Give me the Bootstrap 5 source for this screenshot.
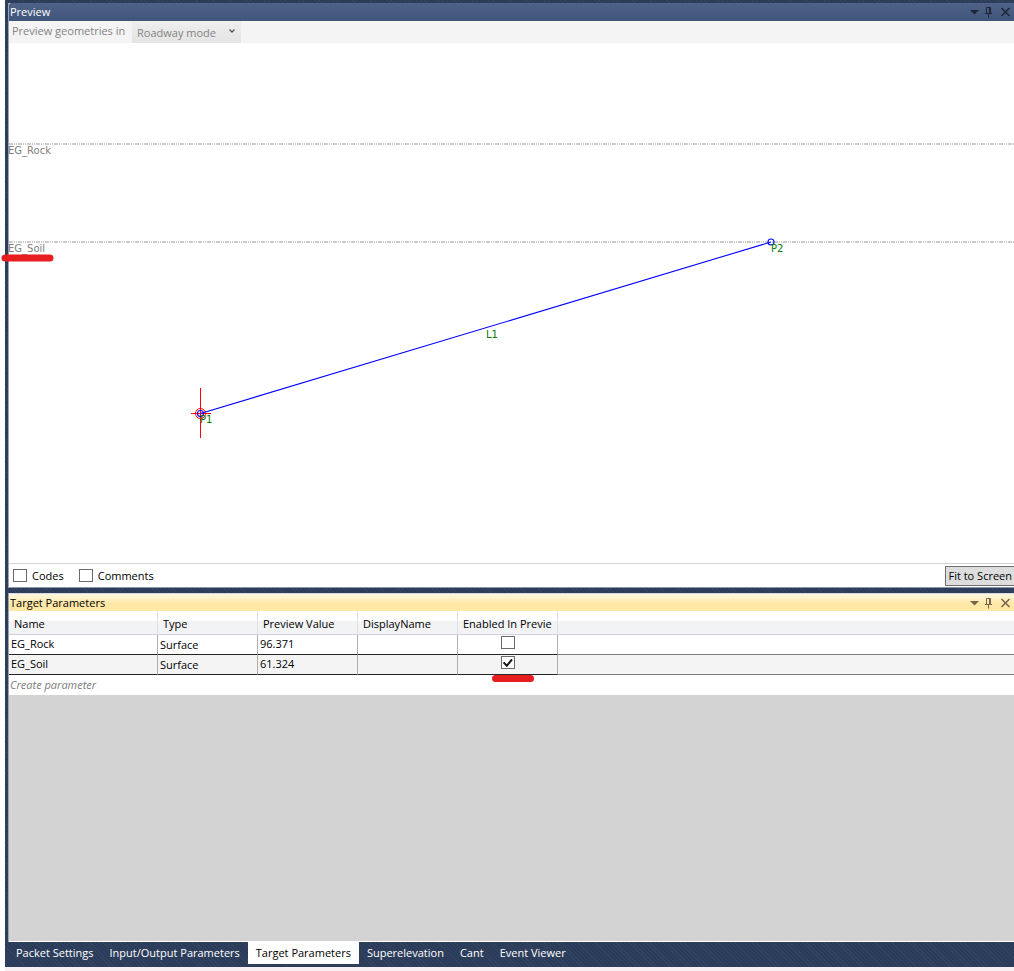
<!DOCTYPE html>
<html lang="en">
<head>
<meta charset="utf-8">
<meta name="viewport" content="width=device-width, initial-scale=1">
<title>Preview</title>
<link href="https://cdn.jsdelivr.net/npm/bootstrap@5.3.0/dist/css/bootstrap.min.css" rel="stylesheet">
<style>
  :root { --navy: #2b3c5a; --navy-alt: #32435f; }
  body { font-family: "Open Sans", "Noto Sans", sans-serif; font-size: 11px; line-height: 16px; color: #000; background: #fff; }
  .shell { margin-left: 5px; min-height: 100vh; border-bottom: 4px solid #f7eff1; }
  .frame { background: repeating-linear-gradient(45deg, var(--navy) 0 2px, var(--navy-alt) 2px 3px); padding: 3px 0 0 3px; }
  .panel { border-left: 1px solid #9aa3b2; background: #fff; }
  .titlebar { height: 18px; padding-left: 1px; }
  .titlebar h2 { font-size: 11px; line-height: 18px; font-weight: 400; }
  .titlebar-preview { background: linear-gradient(#4f6287, #40557b); color: #fff; --glyph: #1c2636; border-top-left-radius: 2px; }
  .titlebar-target { background: linear-gradient(#fff8e2, #ffeaac 50%, #ffe8a6 51%); --glyph: #75684a; border-top: 1px solid #d8d9dc; border-top-left-radius: 2px; }
  .tool { border: 0; padding: 0; background: none; color: var(--glyph); width: 16px; height: 16px; line-height: 0; }
  .toolbar { height: 22px; background: #f4f4f4; color: #838383; }
  .toolbar label { padding-left: 3px; line-height: 20px; width: 123px; white-space: nowrap; }
  .mode { position: relative; }
  .mode select { appearance: none; border: 0; width: 109px; height: 22px; padding: 1px 0 0 5px; font-size: 11px; line-height: 21px; color: #838383; opacity: 1; background: linear-gradient(#eeeeee, #e4e4e4); }
  .mode svg { position: absolute; right: 5px; top: 7px; pointer-events: none; }
  .drawing { display: block; width: 100%; height: 520px; overflow: visible; font-family: "DejaVu Sans", sans-serif; font-size: 10px; }
  .options { height: 25px; border-top: 1px solid #d3d4d8; border-bottom: 1px solid #8d96a5; padding-left: 4px; }
  .options label { margin-left: 5px; margin-right: 15px; }
  .tick { appearance: none; width: 14px; height: 13px; margin: 0; border: 1px solid #6a6a6a; background: #fff; flex: none; }
  .tick:checked { background: #fff url("data:image/svg+xml,%3Csvg xmlns='http://www.w3.org/2000/svg' viewBox='0 0 12 11'%3E%3Cpath d='M1.6 5.4 4.8 8.8 10 2.4' fill='none' stroke='%23151515' stroke-width='2'/%3E%3C/svg%3E") center/12px 11px no-repeat; }
  .fit { border: 1px solid #707070; border-right: 0; background: #ddd; padding: 0 2px; height: 20px; line-height: 18px; white-space: nowrap; }
  .splitter { height: 5px; }
  .grid-view { table-layout: fixed; width: 100%; border-collapse: separate; border-spacing: 0; }
  .grid-view th { height: 24px; padding: 2px 0 0 5px; font-weight: 400; line-height: 16px; white-space: nowrap; overflow: hidden; background: linear-gradient(#fff 42%, #f2f3f5 43%); border-bottom: 1px solid #cfd1d6; border-right: 1px solid #dfe0e3; }
  .grid-view th:last-child { border-right: 0; }
  .grid-view .entry td { height: 20px; padding: 0 0 0 2px; line-height: 18px; border-bottom: 1px solid #262626; border-right: 1px solid #b0b0b0; vertical-align: top; }
  .grid-view .entry td:nth-child(2) { padding-top: 1px; }
  .grid-view .entry td:last-child { border-right: 0; border-bottom-color: #7b7b7b; }
  .grid-view .entry:nth-child(even) td { background: #f4f4f4; }
  .grid-view .entry td:nth-child(5) { padding-left: 0; }
  .grid-view .entry .tick { display: block; margin: 1px auto 0; }
  .grid-view .create td { height: 20px; padding: 0 0 0 1px; color: #7c7c7c; font-style: italic; line-height: 20px; }
  .marked { position: relative; }
  .marker { position: absolute; left: 34px; bottom: -8px; width: 42px; height: 7px; border-radius: 4px; background: #e71d1f; z-index: 1; }
  .void { background: #d3d3d3; border-bottom: 1px solid #fff; }
  .tabs { height: 25px; padding-bottom: 3px; }
  .tabs a { color: #fff; text-decoration: none; line-height: 22px; padding: 0 8px; white-space: nowrap; }
  .tabs a.active { background: #fff; color: #000; }
</style>
</head>
<body>
<div class="shell d-flex flex-column">
  <main class="frame d-flex flex-column flex-grow-1">
    <section class="panel">
      <header class="titlebar titlebar-preview d-flex align-items-center">
        <h2 class="m-0 me-auto">Preview</h2>
        <button class="tool" type="button" aria-label="Window menu"><svg width="16" height="16"><path d="M4 6h9L8.500 10.500z" fill="currentColor"/></svg></button>
        <button class="tool" type="button" aria-label="Pin"><svg width="16" height="16" fill="none" stroke="currentColor"><path d="M4.500 9.500v-6h4v6M7.500 4v5.500M3 9.500h7M6.500 10v3.500"/></svg></button>
        <button class="tool" type="button" aria-label="Close"><svg width="16" height="16" fill="none" stroke="currentColor" stroke-width="1.500"><path d="M3.500 4l8 8M11.500 4l-8 8"/></svg></button>
      </header>
      <div class="toolbar d-flex">
        <label for="mode">Preview geometries in</label>
        <div class="mode">
          <select id="mode" disabled><option>Roadway mode</option></select>
          <svg width="8" height="6" fill="none" stroke="#555" stroke-width="1.300"><path d="M1.500 1.500 4 4 6.500 1.500"/></svg>
        </div>
      </div>
      <svg class="drawing" role="img" aria-label="Geometry preview">
        <g stroke="#999" stroke-dasharray="4 1 1 1 1 1">
          <line x1="0" y1="101" x2="100%" y2="101"/>
          <line x1="0" y1="199" x2="100%" y2="199"/>
        </g>
        <g fill="#808080"><text x="-1" y="111">EG_Rock</text><text x="-1" y="209">EG_Soil</text></g>
        <g fill="none" stroke="#f00"><path d="M191.500 345v50M182 370.500h20"/><circle cx="191.500" cy="370.500" r="5"/></g>
        <g fill="none" stroke="#00f" stroke-width="1.100"><path d="M191.500 370.500 762 199"/><circle cx="191.500" cy="370.500" r="3"/><circle cx="762" cy="199" r="3"/></g>
        <g fill="#087808"><text x="191" y="380">P1</text><text x="477" y="295">L1</text><text x="762" y="209">P2</text></g>
        <path d="M-4 215H41" stroke="#e71d1f" stroke-width="7" stroke-linecap="round"/>
      </svg>
      <div class="options d-flex align-items-center">
        <input class="tick" type="checkbox" id="codes"><label for="codes">Codes</label>
        <input class="tick" type="checkbox" id="comments"><label for="comments">Comments</label>
        <button class="fit ms-auto" type="button">Fit to Screen</button>
      </div>
    </section>
    <div class="splitter"></div>
    <section class="panel d-flex flex-column flex-grow-1">
      <header class="titlebar titlebar-target d-flex align-items-center">
        <h2 class="m-0 me-auto">Target Parameters</h2>
        <button class="tool" type="button" aria-label="Window menu"><svg width="16" height="16"><path d="M4 6h9L8.500 10.500z" fill="currentColor"/></svg></button>
        <button class="tool" type="button" aria-label="Pin"><svg width="16" height="16" fill="none" stroke="currentColor"><path d="M4.500 9.500v-6h4v6M7.500 4v5.500M3 9.500h7M6.500 10v3.500"/></svg></button>
        <button class="tool" type="button" aria-label="Close"><svg width="16" height="16" fill="none" stroke="currentColor" stroke-width="1.500"><path d="M3.500 4l8 8M11.500 4l-8 8"/></svg></button>
      </header>
      <table class="grid-view">
        <colgroup><col style="width:149px"><col style="width:100px"><col style="width:100px"><col style="width:100px"><col style="width:100px"><col></colgroup>
        <thead><tr><th>Name</th><th>Type</th><th>Preview Value</th><th>DisplayName</th><th>Enabled In Previe</th><th></th></tr></thead>
        <tbody>
          <tr class="entry"><td>EG_Rock</td><td>Surface</td><td>96.371</td><td></td><td><input class="tick" type="checkbox" aria-label="EG_Rock enabled in preview"></td><td></td></tr>
          <tr class="entry"><td>EG_Soil</td><td>Surface</td><td>61.324</td><td></td><td class="marked"><input class="tick" type="checkbox" checked aria-label="EG_Soil enabled in preview"><span class="marker"></span></td><td></td></tr>
          <tr class="create"><td colspan="6">Create parameter</td></tr>
        </tbody>
      </table>
      <div class="void flex-grow-1"></div>
    </section>
    <nav class="tabs d-flex">
      <a href="#">Packet Settings</a><a href="#">Input/Output Parameters</a><a class="active" href="#" aria-current="page">Target Parameters</a><a href="#">Superelevation</a><a href="#">Cant</a><a href="#">Event Viewer</a>
    </nav>
  </main>
</div>
<script src="https://cdn.jsdelivr.net/npm/bootstrap@5.3.0/dist/js/bootstrap.bundle.min.js"></script>
</body>
</html>
